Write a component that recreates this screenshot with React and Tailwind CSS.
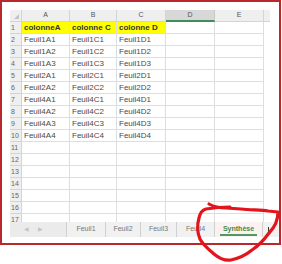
import React from "react";

const cols = [
  { name: "A", w: "w-[48px]" },
  { name: "B", w: "w-[47px]" },
  { name: "C", w: "w-[49px]" },
  { name: "D", w: "w-[49px]" },
  { name: "E", w: "w-[49px]" },
];

const rows = [
  ["colonneA", "colonne C", "colonne D"],
  ["Feuil1A1", "Feuil1C1", "Feuil1D1"],
  ["Feuil1A2", "Feuil1C2", "Feuil1D2"],
  ["Feuil1A3", "Feuil1C3", "Feuil1D3"],
  ["Feuil2A1", "Feuil2C1", "Feuil2D1"],
  ["Feuil2A2", "Feuil2C2", "Feuil2D2"],
  ["Feuil4A1", "Feuil4C1", "Feuil4D1"],
  ["Feuil4A2", "Feuil4C2", "Feuil4D2"],
  ["Feuil4A3", "Feuil4C3", "Feuil4D3"],
  ["Feuil4A4", "Feuil4C4", "Feuil4D4"],
  [], [], [], [], [], [],
];

const tabs = [
  { label: "Feuil1", w: "w-[39px]" },
  { label: "Feuil2", w: "w-[35px]" },
  { label: "Feuil3", w: "w-[36px]" },
  { label: "Feuil4", w: "w-[38px]" },
];

const HeaderRow = () => (
  <div className="flex h-[12px]">
    <div className="w-[12px] bg-[#efefef] border-r border-b border-[#d4d4d4] relative">
      <div className="absolute right-[2px] bottom-[2px] w-0 h-0 border-l-[5px] border-l-transparent border-b-[5px] border-b-[#c4c4c4]" />
    </div>
    {cols.map((c) =>
      c.name === "D" ? (
        <div
          key={c.name}
          className={`${c.w} bg-[#d8d8d8] border-r border-b-2 border-r-[#c8c8c8] border-b-[#3f8c5c] flex items-center justify-center text-[7px] text-[#555]`}
        >
          {c.name}
        </div>
      ) : (
        <div
          key={c.name}
          className={`${c.w} bg-[#efefef] border-r border-b border-[#d4d4d4] flex items-center justify-center text-[7px] text-[#555]`}
        >
          {c.name}
        </div>
      )
    )}
    <div className="w-[6px] bg-[#efefef] border-b border-[#d4d4d4]" />
  </div>
);

const Row = ({ n, cells }) => (
  <div className="flex h-[12px]">
    <div className="w-[12px] bg-[#efefef] border-r border-b border-[#d4d4d4] text-[7px] leading-[11px] text-[#666] pl-[1px]">
      {n}
    </div>
    {cols.map((c, i) => {
      const text = i < 3 ? cells[i] : null;
      const header = n === 1 && i < 3;
      return (
        <div
          key={c.name}
          className={`${c.w} border-r border-b border-[#dedede] text-[8px] leading-[11px] pl-[2px] whitespace-nowrap overflow-hidden ${
            header ? "bg-[#ffff00] font-bold text-[#333]" : "text-[#4a4a4a]"
          }`}
        >
          {text}
        </div>
      );
    })}
  </div>
);

const TabBar = () => (
  <div className="flex h-[15px] bg-[#f1f1f1] text-[7px] text-[#777]">
    <div className="w-[56px] bg-[#ebebeb] flex items-center gap-[9px] pl-[14px] text-[6px] text-[#c4c4c4]">
      <span>◀</span>
      <span>▶</span>
    </div>
    {tabs.map((t) => (
      <div
        key={t.label}
        className={`${t.w} border-l border-[#d0d0d0] flex items-center justify-center`}
      >
        {t.label}
      </div>
    ))}
    <div className="w-[48px] bg-[#fbf1f1] border-l border-[#d0d0d0] flex flex-col items-center justify-center">
      <span className="font-bold text-[#3d8a4f] leading-[10px] border-b-2 border-[#4f9a62] px-[3px]">
        Synthèse
      </span>
    </div>
    <div className="w-[8px] border-l border-[#d0d0d0] flex items-end justify-end pr-[1px] pb-[1px]">
      <div className="w-[1px] h-[9px] bg-[#333]" />
    </div>
  </div>
);

export default function App() {
  return (
    <div className="relative w-[282px] h-[264px] bg-white font-['Liberation_Sans',Arial,sans-serif]">
      <div className="w-[281px] h-[245px] border-2 border-[#b8282d] pl-[8px] pt-[8px]">
        <HeaderRow />
        {rows.map((cells, i) => (
          <Row key={i} n={i + 1} cells={cells} />
        ))}
        <div className="h-[8px] overflow-hidden">
          <Row n={17} cells={[]} />
        </div>
        <TabBar />
      </div>
      <svg
        className="absolute left-0 top-0 pointer-events-none"
        width="282"
        height="264"
        viewBox="0 0 282 264"
      >
        <path
          d="M209 204 C214 207 220 208 226 208 L241 209 C252 210 262 210 268 211 L278 212 C278 220 274 228 269 233 C264 240 258 246 252 250 C246 255 240 258 231 260 C225 261 220 259 214 254 C208 249 203 245 200 239 C197 232 197 225 199 218 C200 213 202 210 206 209 C212 208 220 207 230 207"
          fill="none"
          stroke="#e3141c"
          strokeWidth="3.2"
          strokeLinecap="round"
          strokeLinejoin="round"
        />
      </svg>
    </div>
  );
}
